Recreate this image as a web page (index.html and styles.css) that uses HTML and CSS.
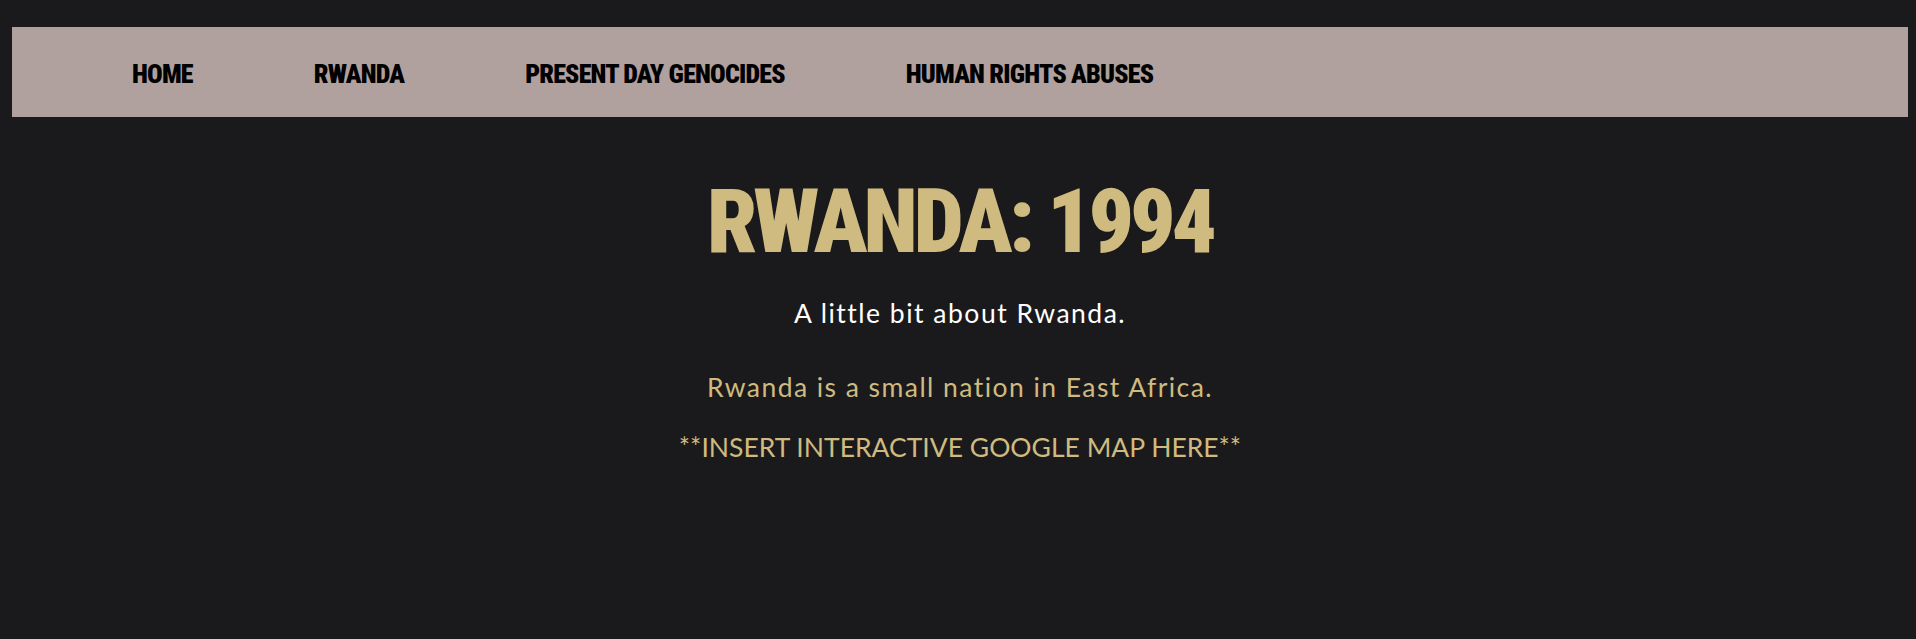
FILE: index.html
```html
<!DOCTYPE html>
<html>
<head>
<meta charset="utf-8">
<title>Rwanda: 1994</title>
<link rel="stylesheet" href="styles.css">
</head>
<body>
<nav class="topnav">
  <ul class="nav-list">
    <li><a class="nav-link" href="#">HOME</a></li>
    <li><a class="nav-link" href="#">RWANDA</a></li>
    <li><a class="nav-link" href="#">PRESENT DAY GENOCIDES</a></li>
    <li><a class="nav-link" href="#">HUMAN RIGHTS ABUSES</a></li>
  </ul>
</nav>
<main class="content">
  <h1 class="title">RWANDA: 1994</h1>
  <p class="subtitle">A little bit about Rwanda.</p>
  <p class="body-text">Rwanda is a small nation in East Africa.</p>
  <p class="body-text map">**INSERT INTERACTIVE GOOGLE MAP HERE**</p>
</main>
</body>
</html>
```
FILE: styles.css
```css
html, body {
  margin: 0;
  background: #1a1a1c;
}
body {
  padding: 27px 8px 0 12px;
  min-height: 639px;
  box-sizing: border-box;
}
.topnav {
  background: #b0a09e;
  height: 90px;
  display: flex;
  align-items: center;
}
.nav-list {
  list-style: none;
  margin: 0;
  padding: 4px 0 0 120px;
  display: flex;
  gap: 121px;
}
.nav-link {
  font-family: "Roboto Condensed", sans-serif;
  font-weight: 900;
  font-size: 26px;
  letter-spacing: -0.8px;
  color: #000;
  text-decoration: none;
}
.content {
  text-align: center;
}
.title {
  font-family: "Roboto Condensed", sans-serif;
  font-weight: 900;
  font-size: 89px;
  line-height: 1;
  letter-spacing: -4px;
  color: #cfbb80;
  margin: 60px 0 0;
}
.subtitle {
  font-family: "Lato", sans-serif;
  font-size: 26.5px;
  line-height: 1.2;
  letter-spacing: 1.5px;
  color: #ffffff;
  margin: 0;
  padding-top: 32px;
}
.body-text {
  font-family: "Lato", sans-serif;
  font-size: 26.5px;
  line-height: 1.2;
  letter-spacing: 1.45px;
  color: #cfbb80;
  margin: 42px 0 0;
}
.map {
  margin-top: 28px;
  letter-spacing: 0;
}
```
